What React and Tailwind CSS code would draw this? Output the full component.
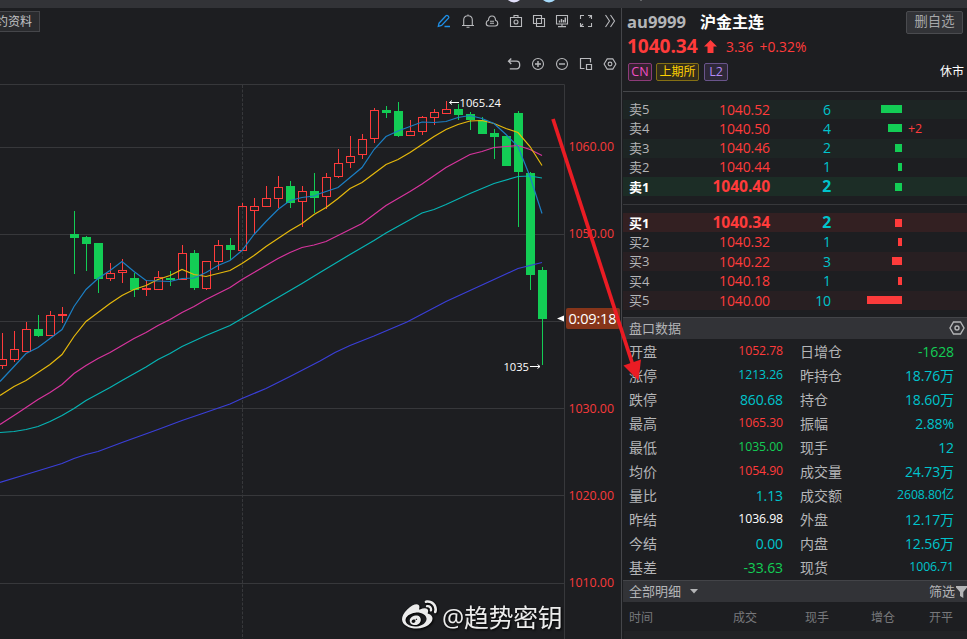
import { FaWeibo } from "react-icons/fa";

const UP = "#ff3b3b";
const DOWN = "#13cd55";

// [high, body top, body bottom, low, direction], one candle every 12px
const candles = [
  [333, 359, 366, 369, "up"],
  [331, 349, 360, 362, "up"],
  [322, 329, 352, 352, "up"],
  [315, 329, 336, 337, "down"],
  [311, 315, 336, 336, "up"],
  [307, 314, 316, 323, "up"],
  [211, 234, 238, 274, "down"],
  [236, 237, 244, 271, "down"],
  [243, 243, 279, 293, "down"],
  [263, 273, 279, 281, "up"],
  [259, 270, 273, 283, "up"],
  [273, 278, 290, 297, "down"],
  [280, 288, 290, 296, "up"],
  [271, 277, 290, 290, "up"],
  [271, 278, 280, 286, "down"],
  [245, 253, 280, 280, "up"],
  [250, 253, 288, 290, "down"],
  [261, 261, 289, 290, "up"],
  [240, 245, 262, 270, "up"],
  [238, 245, 250, 260, "down"],
  [203, 206, 251, 251, "up"],
  [198, 206, 211, 234, "up"],
  [186, 198, 207, 207, "up"],
  [176, 187, 199, 208, "up"],
  [181, 186, 203, 208, "down"],
  [186, 191, 202, 227, "up"],
  [173, 191, 198, 213, "down"],
  [173, 177, 197, 209, "up"],
  [149, 163, 177, 178, "up"],
  [136, 156, 163, 168, "up"],
  [134, 139, 155, 159, "up"],
  [108, 110, 139, 143, "up"],
  [106, 110, 113, 118, "down"],
  [102, 111, 136, 137, "down"],
  [120, 131, 136, 136, "up"],
  [116, 117, 132, 135, "up"],
  [109, 112, 118, 125, "up"],
  [101, 109, 114, 114, "up"],
  [104, 109, 115, 120, "down"],
  [112, 114, 120, 130, "down"],
  [117, 120, 134, 134, "down"],
  [129, 133, 137, 159, "down"],
  [136, 136, 166, 166, "down"],
  [111, 113, 172, 227, "down"],
  [172, 173, 275, 290, "down"],
  [267, 270, 319, 365, "down"],
];

const averages = [
  {
    color: "#3a3fd8",
    points:
      "0,482 26,474 62,463 74,458 86,454 98,451 122,442 158,429 182,420 204,412.5 230,403.5 242,398 266,388 290,376 320,360.5 335,352 350,345 374,335.5 407,321.5 446,301 494,279 518,268 542,262",
  },
  {
    color: "#06b4b4",
    points:
      "0,432 14,431 26,429 38,426 50,421 62,415 74,408 86,400 98,393.5 110,387 122,380 146,366.5 158,359 170,353 182,346 206,335 230,325 242,318 278,297 302,283 320,272 350,254 374,240 386,232.5 422,212.5 434,209 446,204 470,193 494,183 518,176 530,175.5 542,177.5",
  },
  {
    color: "#d8349e",
    points:
      "0,424 17,413 38,399 50,392 62,384 74,373 86,365 98,358 110,352 122,345 134,338 146,332 158,325 170,319 182,312 194,306 206,299 218,293 230,287 242,279 254,272 266,265 278,258 290,252 302,247 314,244.5 326,241 362,223 386,205 398,198 410,191 422,183.5 446,167 470,154 482,151 494,147 506,146 518,145 530,149 542,155",
  },
  {
    color: "#e6b90c",
    points:
      "0,395 14,386 26,380 38,372 50,364 62,354 74,336 86,321 98,312 110,303 122,295 134,289 146,285 158,279 170,275 182,269 194,274 206,276 218,273 230,270 242,263 254,255 266,246 278,238 290,230 302,223 314,214 326,207 338,198 350,188 362,182 374,173 386,164 398,159 410,152 422,144 434,136 446,129 458,124 470,120.5 482,120 494,123 506,128 518,132 530,146 542,165",
  },
  {
    color: "#1b7fc4",
    points:
      "0,381 14,366 26,353 38,347 50,338 62,329 74,306 86,289 98,278 110,270 122,261 134,271 146,280 158,280.5 170,281 182,278 194,277.5 206,272 218,265 230,260 242,250 254,234 266,221 278,209 290,200 302,197 314,195.5 320,193 338,187 350,177 362,167 374,149 386,136 398,130.5 410,126 422,121.5 434,122 446,121 458,117 470,115 482,118 494,123 506,134 518,146 530,176 542,213",
  },
];

const gridLines = [
  { y: 147, label: "1060.00", labelY: 151 },
  { y: 234, label: "1050.00", labelY: 238 },
  { y: 321 },
  { y: 408, label: "1030.00", labelY: 413 },
  { y: 495, label: "1020.00", labelY: 500 },
  { y: 583, label: "1010.00", labelY: 587 },
];

const asks = [
  { name: "卖5", price: "1040.52", volume: 6, bar: 21 },
  { name: "卖4", price: "1040.50", volume: 4, bar: 14, change: "+2" },
  { name: "卖3", price: "1040.46", volume: 2, bar: 7 },
  { name: "卖2", price: "1040.44", volume: 1, bar: 4 },
  { name: "卖1", price: "1040.40", volume: 2, bar: 7, best: true },
];

const bids = [
  { name: "买1", price: "1040.34", volume: 2, bar: 7, best: true },
  { name: "买2", price: "1040.32", volume: 1, bar: 4 },
  { name: "买3", price: "1040.22", volume: 3, bar: 10 },
  { name: "买4", price: "1040.18", volume: 1, bar: 4 },
  { name: "买5", price: "1040.00", volume: 10, bar: 35 },
];

const red = "text-[#ff3b3b]";
const green = "text-[#13cd55]";
const cyan = "text-[#00c4cc]";

const stats = [
  ["开盘", "1052.78", red, "日增仓", "-1628", green],
  ["涨停", "1213.26", cyan, "昨持仓", "18.76万", cyan],
  ["跌停", "860.68", cyan, "持仓", "18.60万", cyan],
  ["最高", "1065.30", red, "振幅", "2.88%", cyan],
  ["最低", "1035.00", green, "现手", "12", cyan],
  ["均价", "1054.90", red, "成交量", "24.73万", cyan],
  ["量比", "1.13", cyan, "成交额", "2608.80亿", cyan],
  ["昨结", "1036.98", "text-white", "外盘", "12.17万", cyan],
  ["今结", "0.00", cyan, "内盘", "12.56万", cyan],
  ["基差", "-33.63", green, "现货", "1006.71", cyan],
];

const Icon = ({ children, className = "w-6" }) => (
  <div className={`flex justify-center ${className}`}>
    <svg
      width="14"
      height="14"
      viewBox="0 0 14 14"
      fill="none"
      stroke="currentColor"
      strokeWidth="1.1"
    >
      {children}
    </svg>
  </div>
);

const Toolbar = () => (
  <div className="flex justify-end h-[14px] mt-[6px] text-[#b9babd]">
    <Icon className="w-6 text-[#1e90e8]">
      <path d="M2 9.2 9 1.7Q9.9 1 10.8 1.8L11.6 2.6Q12.2 3.3 11.5 4.1L4.6 11.5 1.3 12.3ZM7.5 12.5H13" strokeWidth="1.3" />
    </Icon>
    <Icon>
      <path d="M1 11.5H13M2.7 11.3V6Q2.7 1.8 7 1.8T11.3 6V11.3M5.5 13.3H8.5M7 .5V2" />
    </Icon>
    <Icon>
      <path d="M3.8 12Q1.2 12 1.2 9.3 1.2 7 3.5 6.3 3.6 2 7 2T10.5 6.3Q12.8 7 12.8 9.3 12.8 12 10.2 12ZM5 7.2H9M5 9.3H9" />
    </Icon>
    <Icon>
      <path d="M1.5 3.5H12.5V12.5H1.5ZM5 3.5V1.5H9V3.5" />
      <circle cx="7" cy="8" r="2" />
    </Icon>
    <Icon className="w-[22px]">
      <path d="M1.5 1.5H9.5V9.5H1.5ZM4.5 4.5H12.5V12.5H4.5Z" />
    </Icon>
    <Icon>
      <path d="M1.5 1.5H12.5V10H1.5ZM3 12.6H11M7 10V12.5" />
      <path d="M4.5 8.5V6.5M6.5 8.5V5M8.5 8.5V6M10.3 8.5V3.5" strokeWidth="1.4" />
    </Icon>
    <Icon>
      <path d="M1.5 5V1.5H5M9 1.5H12.5V5M12.5 9V12.5H9M5 12.5H1.5V9M1.5 12.5 4 10M12.5 1.5 10.4 3.6" />
    </Icon>
    <Icon>
      <path d="M2.5 1 6.5 7 2.5 13M7.5 1 11.5 7 7.5 13" />
    </Icon>
  </div>
);

const ChartTools = () => (
  <div className="flex justify-end h-[14px] mt-[29px] text-[#b9babd]">
    <Icon>
      <path d="M4.3 1.5 1.5 4.2 4.3 7M1.5 4.2H9.5Q12.7 4.2 12.7 8T9.5 11.8H2.8" strokeWidth="1.3" />
    </Icon>
    <Icon>
      <circle cx="7" cy="7" r="5.5" />
      <path d="M4 7H10M7 4V10" strokeWidth="1.4" />
    </Icon>
    <Icon>
      <circle cx="7" cy="7" r="5.5" />
      <path d="M4 7H10" strokeWidth="1.4" />
    </Icon>
    <Icon>
      <path d="M5.5 11.5H1.5V1.5H11.5V5.5M7.5 7.5H12.5V12.5H7.5Z" strokeWidth="1.2" />
    </Icon>
    <Icon>
      <path d="M4.2 1.9H9.8L12.9 7 9.8 12.1H4.2L1.1 7Z" />
      <circle cx="7" cy="7" r="1.9" />
    </Icon>
  </div>
);

const Candle = ({ data, index }) => {
  const [high, top, bottom, low, dir] = data;
  const x = 2 + index * 12;
  const color = dir === "up" ? UP : DOWN;
  if (dir === "down") {
    return (
      <g fill={color}>
        <rect x={x} y={high} width="1" height={low - high} />
        <rect x={x - 4} y={top} width="9" height={bottom - top} />
      </g>
    );
  }
  return (
    <g fill={color}>
      <rect x={x} y={high} width="1" height={top - high} />
      <rect x={x} y={bottom} width="1" height={low - bottom} />
      <rect
        x={x - 3.5}
        y={top + 0.5}
        width="8"
        height={bottom - top - 1}
        fill="none"
        stroke={color}
      />
    </g>
  );
};

const Chart = () => (
  <svg
    className="block"
    width="621"
    height="555"
    viewBox="0 84 621 555"
    fontFamily='"Open Sans", sans-serif'
  >
    <g stroke="#37383b" strokeWidth="1">
      <path d="M0 84.5H564.5V639" fill="none" />
      {gridLines.map((line) => (
        <path key={line.y} d={`M0 ${line.y + 0.5}H564`} />
      ))}
      <path d="M242.5 85V639" strokeDasharray="3 1.5" />
    </g>
    {candles.map((c, i) => (
      <Candle key={i} data={c} index={i} />
    ))}
    {averages.map((ma) => (
      <polyline
        key={ma.color}
        points={ma.points}
        transform="translate(0 .5)"
        fill="none"
        stroke={ma.color}
        strokeWidth="1.2"
      />
    ))}
    <g fill="#f83a3b" fontSize="12.4">
      {gridLines
        .filter((line) => line.label)
        .map((line) => (
          <text key={line.y} x="568.5" y={line.labelY} textLength="45.5">
            {line.label}
          </text>
        ))}
    </g>
    <g fill="#ffffff" fontSize="11.2" fontWeight="500">
      <text x="459.5" y="107" textLength="41.5">1065.24</text>
      <text x="503.5" y="371" textLength="25.5">1035</text>
    </g>
    <g stroke="#ffffff" fill="none">
      <path d="M449.5 102.5H459M452 100.5 449.5 102.5 452 104.5" />
      <path d="M530 366.5H540M537.5 364.5 540 366.5 537.5 368.5" />
    </g>
    <path d="M557 318.5 564 315.5V321.5Z" fill="#ffffff" />
    <rect x="566" y="308" width="54" height="21" rx="2" fill="#86351a" />
    <text x="568.5" y="323.5" fontSize="14.5" fill="#ffffff" textLength="48">
      0:09:18
    </text>
  </svg>
);

const rowColor = (side, best, striped) => {
  if (side === "ask") return best ? "bg-[#1c2d26]" : striped ? "bg-[#1d2524]" : "";
  return best ? "bg-[#332022]" : striped ? "bg-[#281f22]" : "";
};

const BookRow = ({ row, side, striped }) => (
  <div
    className={`flex items-center h-[19px] pl-[6px] tracking-[-0.1px] ${rowColor(
      side,
      row.best,
      striped
    )} ${row.best ? "font-bold text-[15.7px] pt-px" : "text-[14px]"}`}
  >
    <span className={`w-10 text-[13px] ${row.best ? "text-white" : "text-[#b4b5b7]"}`}>
      {row.name}
    </span>
    <span className={`w-[101px] text-right ${red}`}>{row.price}</span>
    <span className={`w-[61px] text-right ${cyan}`}>{row.volume}</span>
    <div className="w-[71px] flex justify-end -mt-px">
      <div
        className={`h-2 ${side === "ask" ? "bg-[#13cd55]" : "bg-[#ff3b3b]"}`}
        style={{ width: row.bar }}
      />
    </div>
    <span className={`ml-[6px] text-[12.5px] ${red}`}>{row.change}</span>
  </div>
);

const Stat = ({ label, value, color }) => (
  <div className="flex items-center justify-between h-6">
    <span className="text-[14px] text-[#b4b5b7]">{label}</span>
    <span
      className={`tracking-[-0.1px] ${color} ${
        value.length > 6 ? "text-[12.3px] relative -top-px" : "text-[14px]"
      }`}
    >
      {value}
    </span>
  </div>
);

const QuotePanel = () => (
  <div className="w-[346px] shrink-0 border-l border-[#45464a] pl-px flex flex-col leading-none">
    <div className="h-[83px] pl-1 pr-[3px]">
      <div className="flex items-center justify-between h-[27px] pt-px">
        <div className="flex items-center font-bold">
          <span className="text-[16.6px] text-[#b4b5b7] w-[73px]">au9999</span>
          <span className="text-[16px] text-white">沪金主连</span>
        </div>
        <button className="h-[23px] w-[57px] mr-px border border-[#4a4b4f] rounded-[2px] bg-[#323337] text-[13.3px] text-[#a6a7aa]">
          删自选
        </button>
      </div>
      <div className={`flex items-center h-[23px] ${red}`}>
        <span className="text-[19.2px] font-bold w-[77px] tracking-[-0.1px] -mt-0.5">1040.34</span>
        <svg width="13" height="13" viewBox="0 0 13 13" fill={UP}>
          <path d="M6.5 0 13 6.5H9.5V13H3.5V6.5H0Z" />
        </svg>
        <span className="text-[13.9px] ml-[9px]">3.36</span>
        <span className="text-[13.9px] ml-[6px]">+0.32%</span>
      </div>
      <div className="flex items-center h-[18px] mt-[5px] ml-px text-[12.5px]">
        <span className="w-6 h-[18px] flex items-center justify-center border border-[#8d3b79] rounded-[2px] bg-[#35222f] text-[#f24fc4]">
          CN
        </span>
        <span className="w-[43px] h-[18px] ml-1 flex items-center justify-center border border-[#857014] rounded-[2px] bg-[#332d1c] text-[12px] text-[#ffd000]">
          上期所
        </span>
        <span className="w-6 h-[18px] ml-[5px] flex items-center justify-center border border-[#69548b] rounded-[2px] bg-[#2e2838] text-[#b489f5]">
          L2
        </span>
        <span className="ml-auto text-[12px] text-white">休市</span>
      </div>
    </div>

    <div className="h-[9px] border-t border-[#45464a]" />
    <div className="h-24 flex flex-col justify-between">
      {asks.map((row, i) => (
        <BookRow key={row.name} row={row} side="ask" striped={i % 2 === 0} />
      ))}
    </div>
    <div className="h-[17px] pt-2">
      <div className="border-t border-[#37383b]" />
    </div>
    <div className="h-[97px] flex flex-col justify-between">
      {bids.map((row, i) => (
        <BookRow key={row.name} row={row} side="bid" striped={i % 2 === 0} />
      ))}
    </div>

    <div className="h-[22px] mt-[7px] pl-[6px] pr-[2px] flex items-center justify-between bg-[#323337] border-t border-[#434448] text-[13px] text-[#b4b5b7]">
      <span>盘口数据</span>
      <svg className="-mt-px" width="16" height="14" viewBox="0 0 16 14" fill="none" stroke="currentColor" strokeWidth="1.4">
        <path d="M4.5 1H11.5L15 7 11.5 13H4.5L1 7Z" />
        <circle cx="8" cy="7" r="2" />
      </svg>
    </div>
    <div className="pl-[6px] h-[241px] pt-px grid grid-cols-[154px_154px] gap-x-[17px]">
      {stats.map(([label, value, color, label2, value2, color2]) => [
        <Stat key={label} label={label} value={value} color={color} />,
        <Stat key={label2} label={label2} value={value2} color={color2} />,
      ])}
    </div>

    <div className="h-[22px] pl-[6px] flex items-center bg-[#323337] border-t border-[#434448] text-[13px] text-[#b4b5b7]">
      <span>全部明细</span>
      <svg className="ml-[9px] -mt-px" width="8" height="5" viewBox="0 0 8 5" fill="currentColor">
        <path d="M0 0H8L4 4.5Z" />
      </svg>
      <span className="ml-auto">筛选</span>
      <svg className="ml-px" width="11" height="12" viewBox="0 0 11 12" fill="currentColor">
        <path d="M0 0H11V1.5L7.3 6V12L4 10V6L0 1.5Z" />
      </svg>
    </div>
    <div className="h-[29px] pl-[6px] pt-[3px] flex items-center text-[12px] text-[#77787b]">
      <span className="w-[104px]">时间</span>
      <span className="w-[72px]">成交</span>
      <span className="w-[66px]">现手</span>
      <span className="w-[58px]">增仓</span>
      <span>开平</span>
    </div>
    <div className="flex-1 ml-px bg-[#212225]" />
  </div>
);

export default function App() {
  return (
    <div className="relative w-[967px] h-[639px] overflow-hidden bg-[#1d1e21] flex flex-col font-['Open_Sans','Noto_Sans_CJK_SC',sans-serif]">
      <div className="h-2 shrink-0 bg-[#323337]" />
      <div className="flex flex-1 min-h-0">
        <div className="relative w-[621px] shrink-0">
          <div className="flex justify-between h-[76px]">
            <div className="mt-[3px] h-[21px] w-10 flex items-center justify-end pr-[7px] border border-l-0 border-[#45464a] bg-[#2a2b2e] text-[12px] leading-none whitespace-nowrap text-[#c3c4c6]">
              约资料
            </div>
            <div className="w-[192px] mr-[-1px]">
              <Toolbar />
              <ChartTools />
            </div>
          </div>
          <Chart />
          <div className="absolute left-[402px] top-[590px] flex items-center text-[#ececec] drop-shadow-[1px_1px_1px_#000]">
            <FaWeibo className="w-[35px] h-[35px]" />
            <span className="ml-[5px] mt-[3px] text-[24.8px] leading-none whitespace-nowrap tracking-[-0.2px]">@趋势密钥</span>
          </div>
        </div>
        <QuotePanel />
      </div>

      <svg className="absolute inset-0" width="967" height="639" viewBox="0 0 967 639">
        <circle cx="514" cy="-6" r="8.5" fill="#e2e0fa" />
        <circle cx="549" cy="-6" r="8.5" fill="#a6dafa" />
        <circle cx="641" cy="0" r="1" fill="#77787b" />
        <path d="M553 119 632.5 364" stroke="#ea1c24" strokeWidth="3.7" />
        <path d="M638.5 380.5 623.5 365.5 641 359.5Z" fill="#ea1c24" />
      </svg>
    </div>
  );
}
